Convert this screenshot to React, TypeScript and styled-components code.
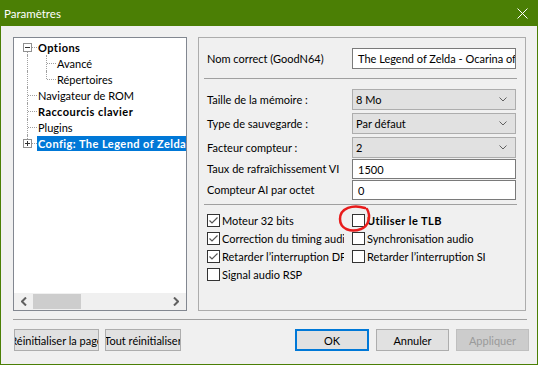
import React from 'react';
import styled, { createGlobalStyle } from 'styled-components';

const GlobalStyle = createGlobalStyle`
  html, body {
    margin: 0;
    padding: 0;
    background: #f0f0f0;
  }
  body {
    font-family: Lato, "Noto Sans", sans-serif;
    font-size: 11px;
    color: #000;
  }
`;

const Window = styled.div`
  position: relative;
  width: 538px;
  height: 365px;
  box-sizing: border-box;
  border: 1px solid #4b7f05;
  border-top: none;
  display: flex;
  flex-direction: column;
  background: #f0f0f0;
  overflow: hidden;
`;

const TitleBar = styled.div`
  height: 26px;
  flex-shrink: 0;
  background: #4b7f05;
  color: #fff;
  font-size: 11.5px;
  display: flex;
  align-items: center;
  justify-content: space-between;
  padding: 0 9px 0 3px;
`;

const Body = styled.div`
  flex: 1;
  display: flex;
  flex-direction: column;
  padding: 11px 11px 0 12px;
`;

const Main = styled.div`
  display: flex;
  gap: 11px;
  height: 274px;
`;

const TreePanel = styled.div`
  width: 174px;
  flex-shrink: 0;
  box-sizing: border-box;
  border: 1px solid #828790;
  background: #fff;
  display: flex;
  flex-direction: column;
  overflow: hidden;
`;

const TreeList = styled.div`
  flex: 1;
  padding: 1px 0 0 4px;
  overflow: hidden;
`;

const TreeRow = styled.div`
  display: flex;
  align-items: center;
  height: 16px;
  white-space: nowrap;
`;

const Cell = styled.span<{ $vert: 'full' | 'top' | 'bottom' | 'none'; $horiz?: boolean }>`
  position: relative;
  flex-shrink: 0;
  width: 19px;
  height: 16px;

  &::before {
    content: '';
    display: ${(p) => (p.$vert === 'none' ? 'none' : 'block')};
    position: absolute;
    left: 9px;
    top: ${(p) => (p.$vert === 'bottom' ? '8px' : '0')};
    height: ${(p) => (p.$vert === 'full' ? '16px' : '8px')};
    border-left: 1px dotted #a0a0a0;
  }

  &::after {
    content: '';
    display: ${(p) => (p.$horiz ? 'block' : 'none')};
    position: absolute;
    left: 10px;
    top: 8px;
    width: 9px;
    border-top: 1px dotted #a0a0a0;
  }
`;

const Expander = styled.span<{ $open?: boolean }>`
  position: absolute;
  z-index: 1;
  left: 5px;
  top: 4px;
  width: 9px;
  height: 9px;
  box-sizing: border-box;
  border: 1px solid #919191;
  background: #fff;

  &::before {
    content: '';
    position: absolute;
    left: 1px;
    top: 3px;
    width: 5px;
    height: 1px;
    background: #333;
  }

  &::after {
    content: '';
    display: ${(p) => (p.$open ? 'none' : 'block')};
    position: absolute;
    left: 3px;
    top: 1px;
    width: 1px;
    height: 5px;
    background: #333;
  }
`;

const TreeLabel = styled.span<{ $bold?: boolean; $selected?: boolean }>`
  padding: 0 2px 0 1px;
  line-height: 15px;
  font-weight: ${(p) => (p.$bold ? 700 : 400)};
  letter-spacing: ${(p) => (p.$bold ? '0.45px' : '0')};
  background: ${(p) => (p.$selected ? '#0078d7' : 'transparent')};
  color: ${(p) => (p.$selected ? '#fff' : '#000')};
`;

const HScroll = styled.div`
  height: 17px;
  flex-shrink: 0;
  background: #f0f0f0;
  display: flex;
  align-items: center;
  padding: 0 4px;
  gap: 3px;
`;

const ScrollArrow = styled.span`
  width: 12px;
  display: flex;
  justify-content: center;
`;

const ScrollTrack = styled.div`
  flex: 1;
  height: 15px;
  display: flex;
`;

const ScrollThumb = styled.div`
  width: 48px;
  height: 15px;
  background: #cdcdcd;
`;

const SettingsPanel = styled.div`
  flex: 1;
  min-width: 0;
  box-sizing: border-box;
  border: 1px solid #acacac;
  padding: 10px 9px 0 8px;
  display: flex;
  flex-direction: column;
`;

const FieldRow = styled.div<{ $h: number; $gap?: number }>`
  display: flex;
  align-items: center;
  justify-content: space-between;
  height: ${(p) => p.$h}px;
  margin-bottom: ${(p) => p.$gap ?? 0}px;
  white-space: nowrap;
`;

const FieldLabel = styled.span`
  line-height: 16px;
`;

const TextBox = styled.div`
  width: 164px;
  flex-shrink: 0;
  height: 100%;
  box-sizing: border-box;
  border: 1px solid #7a7a7a;
  background: #fff;
  padding-left: 5px;
  display: flex;
  align-items: center;
  overflow: hidden;
  white-space: nowrap;
`;

const Combo = styled.div`
  width: 164px;
  flex-shrink: 0;
  height: 100%;
  box-sizing: border-box;
  border: 1px solid #adadad;
  background: #e1e1e1;
  padding: 0 8px 0 3px;
  display: flex;
  align-items: center;
  justify-content: space-between;
`;

const Separator = styled.div<{ $top: number; $bottom: number }>`
  height: 0;
  border-top: 1px solid #a0a0a0;
  margin: ${(p) => p.$top}px -1px ${(p) => p.$bottom}px -3px;
`;

const CheckGrid = styled.div`
  display: grid;
  grid-template-columns: 137px 1fr;
  column-gap: 8px;
  grid-auto-rows: 18px;
`;

const CheckItem = styled.div<{ $bold?: boolean }>`
  display: flex;
  align-items: center;
  gap: 2px;
  overflow: hidden;
  white-space: nowrap;
  font-weight: ${(p) => (p.$bold ? 700 : 400)};
  letter-spacing: ${(p) => (p.$bold ? '0.45px' : '0')};
`;

const Box = styled.span`
  width: 13px;
  height: 13px;
  flex-shrink: 0;
  box-sizing: border-box;
  border: 1px solid #333;
  background: #fff;
  display: flex;
  align-items: center;
  justify-content: center;
`;

const Footer = styled.div`
  border-top: 1px solid #a0a0a0;
  margin: 8px -1px 0 0;
  padding-top: 9px;
  display: flex;
  align-items: center;
`;

const ButtonGroup = styled.div`
  display: flex;
  gap: 6px;
  margin-left: 1px;
`;

const RightButtons = styled.div`
  display: flex;
  gap: 7px;
  margin-left: auto;
  margin-right: -2px;
`;

const Button = styled.div<{ $w: number; $default?: boolean; $disabled?: boolean }>`
  width: ${(p) => p.$w}px;
  height: 22px;
  box-sizing: border-box;
  border: ${(p) => (p.$default ? '2px solid #0078d7' : p.$disabled ? '1px solid #bfbfbf' : '1px solid #adadad')};
  background: ${(p) => (p.$disabled ? '#cccccc' : '#e1e1e1')};
  color: ${(p) => (p.$disabled ? '#9a9a9a' : '#000')};
  display: flex;
  align-items: center;
  justify-content: center;
  overflow: hidden;
  white-space: nowrap;
`;

const Annotation = styled.svg`
  position: absolute;
  left: 0;
  top: 0;
  pointer-events: none;
`;

const Chevron = () => (
  <svg width="8" height="5" viewBox="0 0 8 5">
    <path d="M0.5 0.5 L4 4 L7.5 0.5" fill="none" stroke="#606060" strokeWidth="1" />
  </svg>
);

const Check = () => (
  <svg width="11" height="11" viewBox="0 0 11 11">
    <path d="M1.5 5.5 L4 8 L9.5 2.5" fill="none" stroke="#555" strokeWidth="1.2" />
  </svg>
);

const CheckBox: React.FC<{ label: string; checked?: boolean; bold?: boolean }> = ({ label, checked, bold }) => (
  <CheckItem $bold={bold}>
    <Box>{checked && <Check />}</Box>
    <span>{label}</span>
  </CheckItem>
);

const App: React.FC = () => {
  return (
    <>
      <GlobalStyle />
      <Window>
        <TitleBar>
          <span>Paramètres</span>
          <svg width="11" height="11" viewBox="0 0 11 11">
            <path d="M0.5 0.5 L10.5 10.5 M10.5 0.5 L0.5 10.5" stroke="#fff" strokeWidth="1" />
          </svg>
        </TitleBar>
        <Body>
          <Main>
            <TreePanel>
              <TreeList>
                <TreeRow>
                  <Cell $vert="bottom" $horiz>
                    <Expander $open />
                  </Cell>
                  <TreeLabel $bold>Options</TreeLabel>
                </TreeRow>
                <TreeRow>
                  <Cell $vert="full" />
                  <Cell $vert="full" $horiz />
                  <TreeLabel>Avancé</TreeLabel>
                </TreeRow>
                <TreeRow>
                  <Cell $vert="full" />
                  <Cell $vert="top" $horiz />
                  <TreeLabel>Répertoires</TreeLabel>
                </TreeRow>
                <TreeRow>
                  <Cell $vert="full" $horiz />
                  <TreeLabel>Navigateur de ROM</TreeLabel>
                </TreeRow>
                <TreeRow>
                  <Cell $vert="full" $horiz />
                  <TreeLabel $bold>Raccourcis clavier</TreeLabel>
                </TreeRow>
                <TreeRow>
                  <Cell $vert="full" $horiz />
                  <TreeLabel>Plugins</TreeLabel>
                </TreeRow>
                <TreeRow>
                  <Cell $vert="top" $horiz>
                    <Expander />
                  </Cell>
                  <TreeLabel $bold $selected>
                    Config: The Legend of Zelda - Ocarina of Time
                  </TreeLabel>
                </TreeRow>
              </TreeList>
              <HScroll>
                <ScrollArrow>
                  <svg width="6" height="9" viewBox="0 0 6 9">
                    <path d="M5 0.5 L1 4.5 L5 8.5" fill="none" stroke="#606060" strokeWidth="2" />
                  </svg>
                </ScrollArrow>
                <ScrollTrack>
                  <ScrollThumb />
                </ScrollTrack>
                <ScrollArrow>
                  <svg width="6" height="9" viewBox="0 0 6 9">
                    <path d="M1 0.5 L5 4.5 L1 8.5" fill="none" stroke="#606060" strokeWidth="2" />
                  </svg>
                </ScrollArrow>
              </HScroll>
            </TreePanel>

            <SettingsPanel>
              <FieldRow $h={21}>
                <FieldLabel>Nom correct (GoodN64)</FieldLabel>
                <TextBox>The Legend of Zelda - Ocarina of Time</TextBox>
              </FieldRow>
              <Separator $top={9} $bottom={10} />
              <FieldRow $h={21} $gap={3}>
                <FieldLabel>Taille de la mémoire :</FieldLabel>
                <Combo>
                  <span>8 Mo</span>
                  <Chevron />
                </Combo>
              </FieldRow>
              <FieldRow $h={21} $gap={3}>
                <FieldLabel>Type de sauvegarde :</FieldLabel>
                <Combo>
                  <span>Par défaut</span>
                  <Chevron />
                </Combo>
              </FieldRow>
              <FieldRow $h={21} $gap={1}>
                <FieldLabel>Facteur compteur :</FieldLabel>
                <Combo>
                  <span>2</span>
                  <Chevron />
                </Combo>
              </FieldRow>
              <FieldRow $h={20} $gap={1}>
                <FieldLabel>Taux de rafraîchissement VI</FieldLabel>
                <TextBox>1500</TextBox>
              </FieldRow>
              <FieldRow $h={20}>
                <FieldLabel>Compteur AI par octet</FieldLabel>
                <TextBox>0</TextBox>
              </FieldRow>
              <Separator $top={4} $bottom={6} />
              <CheckGrid>
                <CheckBox label="Moteur 32 bits" checked />
                <CheckBox label="Utiliser le TLB" bold />
                <CheckBox label="Correction du timing audio" checked />
                <CheckBox label="Synchronisation audio" />
                <CheckBox label="Retarder l’interruption DP" checked />
                <CheckBox label="Retarder l’interruption SI" />
                <CheckBox label="Signal audio RSP" />
              </CheckGrid>
            </SettingsPanel>
          </Main>

          <Footer>
            <ButtonGroup>
              <Button $w={85}>Réinitialiser la page</Button>
              <Button $w={76}>Tout réinitialiser</Button>
            </ButtonGroup>
            <RightButtons>
              <Button $w={74} $default>OK</Button>
              <Button $w={73}>Annuler</Button>
              <Button $w={73} $disabled>Appliquer</Button>
            </RightButtons>
          </Footer>
        </Body>

        <Annotation width="538" height="365" viewBox="0 0 538 365">
          <path
            d="M364 208 C352 204, 339 208, 339 219 C339 229, 350 233, 360 229 C368 226, 370 216, 366 209"
            fill="none"
            stroke="#e81c1c"
            strokeWidth="2.5"
            strokeLinecap="round"
          />
        </Annotation>
      </Window>
    </>
  );
};

export default App;
